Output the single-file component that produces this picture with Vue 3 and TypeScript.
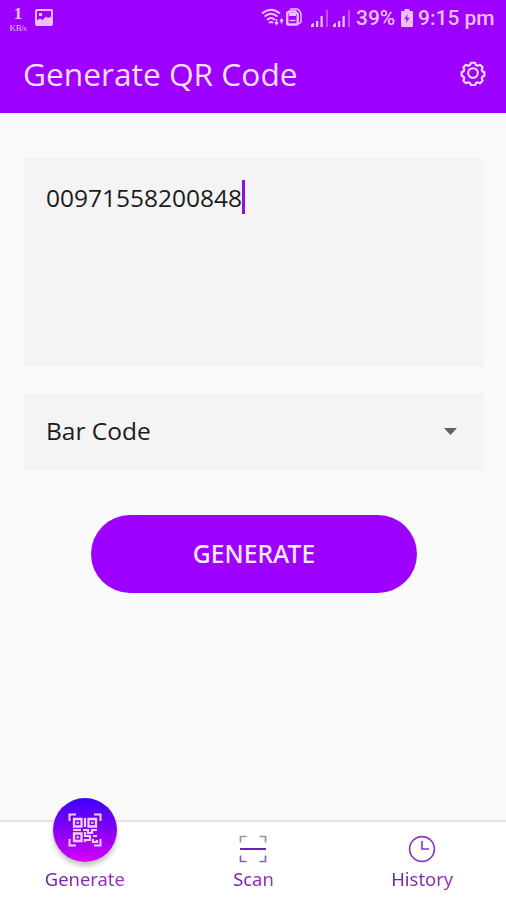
<script setup lang="ts">
import { ref } from 'vue'

type Tab = 'generate' | 'scan' | 'history'

const content = ref<string>('00971558200848')
const format = ref<string>('Bar Code')
const tabs: { id: Tab; label: string }[] = [
  { id: 'generate', label: 'Generate' },
  { id: 'scan', label: 'Scan' },
  { id: 'history', label: 'History' },
]
</script>

<template>
  <div class="screen">
    <header class="top">
      <div class="status">
        <div class="rate"><span class="rate-num">1</span><span class="rate-unit">KB/s</span></div>
        <svg class="picture" width="18" height="17" viewBox="0 0 18 17">
          <path fill="currentColor" fill-rule="evenodd" d="M2 0h14a2 2 0 0 1 2 2v13a2 2 0 0 1-2 2H2a2 2 0 0 1-2-2V2a2 2 0 0 1 2-2zM2 2v9.500l3-2 2.500 1.500 3.500-3.500 2 1.500 3-1.500V2zM4 4h3v3H4z" />
        </svg>
        <svg class="wifi" width="24" height="20" viewBox="0 0 24 20" fill="none" stroke="currentColor" stroke-width="1.800">
          <path d="M1 5.500Q10-2 19 5.500M3.500 8.500Q10 3 16.500 8.500M6 12Q10 8 14 12M8 15Q10 13 12 15" />
          <path d="M15.500 11v5M13.800 14.300l1.700 2 1.700-2M20.500 15.500v-4M19 13.200l1.500-2 1.500 2" stroke-width="1.500" />
        </svg>
        <svg class="sim" width="16" height="18" viewBox="0 0 16 18" fill="none" stroke="currentColor">
          <path d="M4 1h7q4 2 4 6v7l-2 2" stroke-width="1.500" />
          <path d="M1.200 5l2-1.500h6l2.500 2.500v9.500q0 1-1 1H2.200q-1 0-1-1z" stroke-width="2.400" />
          <path d="M3 6.500h7" stroke-width="3" />
          <path d="M3.500 12.500h6" stroke-width="1.500" />
        </svg>
        <svg v-for="n in 2" :key="n" class="signal" width="18" height="17" viewBox="0 0 18 17" fill="currentColor">
          <path d="M0 17v-2l2-2h1v4zM5 11h2.300v6H5zM9.500 6h2.300v11H9.500z" />
          <path d="M15 0h2v17h-2z" opacity=".42" />
        </svg>
        <span class="percent">39%</span>
        <svg class="battery" width="12" height="18" viewBox="0 0 12 18">
          <path fill="currentColor" fill-rule="evenodd" d="M3.500 0h5v2H11q1 0 1 1v14q0 1-1 1H1q-1 0-1-1V3q0-1 1-1h2.500zM6.500 5L3.500 10.200H5.800L5 14 8.500 9H6.200z" />
        </svg>
        <span class="time">9:15 pm</span>
      </div>
      <div class="bar">
        <h1>Generate QR Code</h1>
        <svg class="gear" width="26" height="26" viewBox="0 0 26 26" fill="none" stroke="currentColor" stroke-width="2.100" stroke-linejoin="round">
          <circle cx="13" cy="13" r="4.800" />
          <path d="M11 2.800h4l1 2.200 1.600.7 2.500-.9 2.500 2.500-.9 2.500.7 1.500 2 1v3.400l-2 1-.7 1.500.9 2.500-2.500 2.500-2.500-.9-1.600.7-1 2.200h-4l-1-2.200-1.600-.7-2.500.9-2.500-2.500.9-2.500-.7-1.500-2-1v-3.400l2-1 .7-1.500-.9-2.500 2.500-2.500 2.500.9 1.600-.7z" />
        </svg>
      </div>
    </header>

    <main>
      <div class="field"><span>{{ content }}</span><i class="caret"></i></div>
      <div class="select">
        <span class="format">{{ format }}</span>
        <svg width="13" height="7" viewBox="0 0 13 7"><path d="M0 0h13L6.500 7z" fill="#616161" /></svg>
      </div>
      <button class="generate" type="button">GENERATE</button>
    </main>

    <nav>
      <a v-for="tab in tabs" :key="tab.id" class="tab">
        <div v-if="tab.id === 'generate'" class="disc">
          <svg width="34" height="34" viewBox="0 0 34 34" fill="none" stroke="#f2cfff" stroke-width="2">
            <path d="M1.500 8V1.500H8M26 1.500h6.500V8M32.500 26v6.500H26M8 32.500H1.500V26" />
            <path d="M6 6h7.500v7.500H6zM20.500 6H28v7.500h-7.500zM6 20.500h7.500V28H6z" stroke-width="2.300" />
            <path d="M8.500 9.700h2.500M23 9.700h2.500M8.500 24.300h2.500" stroke-width="2" />
            <path d="M17 5v9M5 17h8M15 17h5v3h4v-3h5M17 19v4h5v4h-5v2M25 23h4M25 26v3h4v-2" stroke-width="2.200" />
          </svg>
        </div>
        <svg v-else-if="tab.id === 'scan'" class="icon" width="28" height="28" viewBox="0 0 28 28" fill="none">
          <path d="M1.500 7.500v-6h6M20.500 1.500h6v6" stroke="#9a8dba" stroke-width="1.700" />
          <path d="M26.500 20.500v6h-6M7.500 26.500h-6v-6" stroke="#8065bd" stroke-width="1.700" />
          <path d="M1 14h26" stroke="#6424bc" stroke-width="2" />
        </svg>
        <svg v-else class="icon" width="28" height="28" viewBox="0 0 28 28" fill="none" stroke="#8933bd" stroke-width="1.600">
          <circle cx="14" cy="14" r="12.400" />
          <path d="M14 6v8h7" />
        </svg>
        <span class="label">{{ tab.label }}</span>
      </a>
    </nav>
  </div>
</template>

<style>
body {
  margin: 0;
}
</style>

<style scoped>
.screen {
  width: 506px;
  height: 900px;
  display: flex;
  flex-direction: column;
  overflow: hidden;
  background: #fafafa;
  font-family: "Open Sans", "Noto Sans", sans-serif;
}
.top {
  height: 113px;
  background: #9d00ff;
  color: #f8dfff;
}
.status {
  height: 36px;
  display: flex;
  align-items: center;
  padding: 0 11px 0 9px;
  box-sizing: border-box;
  color: #edbfff;
  white-space: nowrap;
}
.rate {
  width: 18px;
  display: flex;
  flex-direction: column;
  align-items: center;
  font-family: "Liberation Serif", serif;
}
.rate-num {
  font-size: 17px;
  line-height: 19px;
  font-weight: 700;
}
.rate-unit {
  font-size: 9px;
  line-height: 10px;
  letter-spacing: -0.4px;
}
.picture {
  margin-left: 8px;
  margin-top: -1px;
}
.wifi {
  margin-left: auto;
  margin-top: -1px;
}
.sim {
  margin-left: 1px;
  margin-top: -2px;
  margin-right: 9px;
}
.signal {
  margin-right: 4px;
}
.percent,
.time {
  font-family: Roboto, sans-serif;
  font-weight: 500;
  font-size: 21px;
  line-height: 36px;
}
.percent {
  margin-left: 1px;
  width: 41px;
}
.battery {
  margin: 0 5px 0 4px;
}
.time {
  width: 77px;
}
.bar {
  height: 75px;
  display: flex;
  align-items: center;
  justify-content: space-between;
  padding: 0 20px 0 23px;
}
h1 {
  margin: 0;
  font-size: 31.7px;
  line-height: 40px;
  font-weight: 400;
}
.gear {
  margin-bottom: 2px;
}
main {
  flex: 1;
  display: flex;
  flex-direction: column;
  padding: 45px 22px 0 24px;
  color: #1c1c1c;
  font-size: 24.5px;
}
.field,
.select {
  box-sizing: border-box;
  background: #f4f4f4;
  padding: 0 22px;
  display: flex;
}
.field {
  height: 209px;
  padding-top: 22px;
  line-height: 36px;
}
.caret {
  width: 3px;
  height: 34px;
  background: #8e12cf;
}
.select {
  height: 77px;
  margin-top: 26px;
  padding-right: 27px;
  align-items: center;
  justify-content: space-between;
}
.format {
  padding-bottom: 2px;
}
.generate {
  width: 326px;
  height: 78px;
  margin: 45px 0 0 67px;
  padding: 0;
  border: 0;
  border-radius: 39px;
  background: #9d00ff;
  color: #fbeaff;
  font: 500 24.7px/78px "Noto Sans", "Open Sans", sans-serif;
}
nav {
  height: 80px;
  box-sizing: border-box;
  display: grid;
  grid-template-columns: repeat(3, 1fr);
  background: #fff;
  border-top: 2px solid #e4e4e4;
}
.tab {
  height: 78px;
  padding-left: 1px;
  display: flex;
  flex-direction: column;
  align-items: center;
}
.disc {
  width: 64px;
  height: 64px;
  margin: -24px 0 4px;
  flex: none;
  display: flex;
  align-items: center;
  justify-content: center;
  border-radius: 50%;
  background: linear-gradient(#3d00ff, #7d00f4 45%, #d400f6);
  box-shadow: 0 4px 5px rgba(0, 0, 0, 0.24);
}
.icon {
  margin: 13px 0 3px;
  flex: none;
}
.label {
  font-family: "Noto Sans", "Open Sans", sans-serif;
  font-size: 18.4px;
  line-height: 25px;
  color: transparent;
  background: linear-gradient(90deg, #6c20ad, #a12bc9);
  background-clip: text;
}
</style>
